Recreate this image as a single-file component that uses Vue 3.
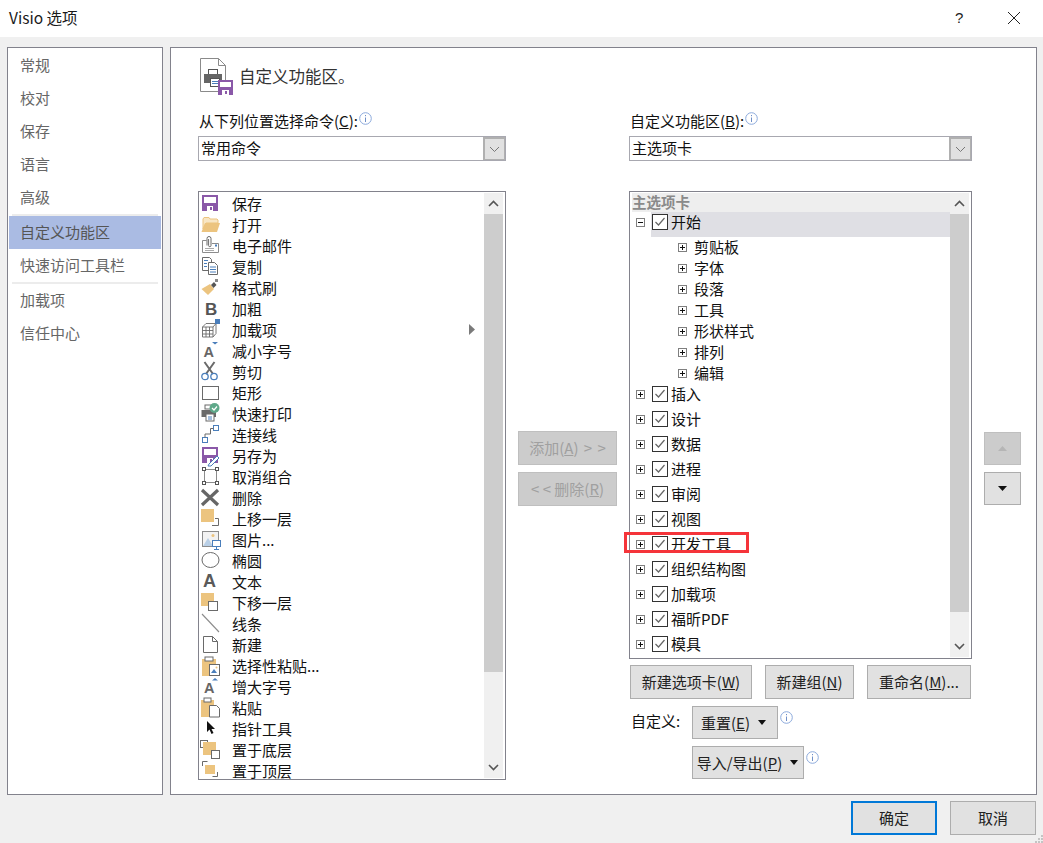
<script setup>
const nav = [
  { t: '常规' }, { t: '校对' }, { t: '保存' }, { t: '语言' }, { t: '高级' },
  { sep: true },
  { t: '自定义功能区', on: true }, { t: '快速访问工具栏' },
  { sep: true },
  { t: '加载项' }, { t: '信任中心' },
]

const T = '#ecc47f', G = '#6a6a6a', L = '#8c8c8c', B = '#4a7ebb', P = '#8a58a8'
const saveBase = `<rect x="2" y="1" width="16" height="16" fill="${P}"/><rect x="4" y="3" width="12" height="6" fill="#fff"/><rect x="7" y="12" width="6" height="5" fill="#fff"/><rect x="10" y="13" width="2" height="3" fill="${P}"/>`
const icons = {
  save: saveBase,
  open: `<path d="M3 14V4l1-1.500h5L10 4h7l1 1v3H6z" fill="#f8e6c4" stroke="${T}"/><path d="M1.500 17 5 8h15l-3 9z" fill="${T}"/>`,
  mail: `<path d="M6.500 4.500H2.500v12h16v-9H12" fill="none" stroke="${L}"/><path d="M7 9V2a2 2 0 0 1 4 0v7a1.200 1.200 0 0 1-2.400 0V2.500" fill="none" stroke="${G}" transform="translate(0 .5)"/><path d="M5 12.500h9M5 14.500h9" stroke="#aaa"/><rect x="15" y="8.500" width="2" height="2" fill="${B}"/>`,
  copy: `<path d="M2.500 .5h7l2 2v11h-9z" fill="#fff" stroke="${G}"/><path d="M8.500 5.500h6l3 3v9h-9z" fill="#fff" stroke="${G}"/><path d="M4 3.500h4M4 6.500h3M4 9.500h3M10 10h6M10 12.500h6M10 15h6" stroke="${B}"/>`,
  brush: `<path d="M1.500 11 10 6l4 5-6 6z" fill="${T}"/><path d="m11 7 3-3 2.500 3-3 3z" fill="#555"/><path d="M15 1h3v3h-3z" fill="#888"/>`,
  bold: `<text x="5" y="16" font-family="Liberation Sans, sans-serif" font-weight="700" font-size="17" fill="#555">B</text>`,
  addin: `<path d="M2.500 7 6 3.500h10v10L13 17H2.500zM2.500 7H13v10M13 7l3-3.500M6 7v10M9.500 7v10M2.500 10.500H13M2.500 14H13" fill="none" stroke="${G}" stroke-width=".9"/><rect x="15" y="-1" width="5" height="5" fill="${B}"/>`,
  shrink: `<text x="3.500" y="16" font-family="Liberation Sans, sans-serif" font-weight="700" font-size="14.500" fill="#666">A</text><path d="M12 1h6l-3 2.500z" fill="${B}"/>`,
  cut: `<path d="M4.500 0l8.500 12M14.500 0 6 12" stroke="${G}" stroke-width="2" fill="none"/><circle cx="5" cy="14.500" r="3.200" fill="none" stroke="${B}" stroke-width="1.300"/><circle cx="14" cy="14.500" r="3.200" fill="none" stroke="${B}" stroke-width="1.300"/>`,
  rect: `<rect x="2.500" y="3.500" width="16" height="13" fill="#fff" stroke="${G}"/>`,
  print: `<rect x="5" y="1" width="7" height="4" fill="#fff" stroke="${G}"/><path d="M1.500 6H16v7H1.500z" fill="${G}"/><rect x="6" y="10" width="8" height="7" fill="#fff" stroke="${G}"/><path d="M8 13h4M8 15h4" stroke="${B}"/><circle cx="14.500" cy="4" r="5" fill="#5fa98a"/><path d="m12 4 2 2 3-3.500" fill="none" stroke="#fff" stroke-width="1.200"/>`,
  connect: `<rect x="13.500" y=".5" width="5" height="5" fill="#fff" stroke="${B}"/><rect x="2.500" y="12.500" width="5" height="5" fill="#fff" stroke="${B}"/><path d="M13.500 3.500h-3V9H5v3.500" fill="none" stroke="${G}"/>`,
  saveas: saveBase + `<path d="m9 18 8-8 2 2-8 8H8z" fill="#fff" stroke="${B}"/>`,
  ungroup: `<rect x="4.500" y="2.500" width="12" height="13" fill="none" stroke="${L}"/><path d="M2 0h4v4H2zM15 0h4v4h-4zM2 14h4v4H2zM15 14h4v4h-4z" fill="#555"/><path d="M3 1h2v2H3zM16 1h2v2h-2zM3 15h2v2H3zM16 15h2v2h-2z" fill="#fff"/>`,
  del: `<path d="m2 2 16 15M18 2 2 17" stroke="#666" stroke-width="3.200"/>`,
  forward: `<path d="M12 16.500h6.500v-7H15" fill="none" stroke="${G}"/><rect x="1" y="0" width="13" height="13" fill="${T}"/>`,
  pic: `<rect x="2.500" y="1.500" width="16" height="15" fill="#f2f2f2" stroke="${L}"/><path d="M3 16 8 8l5 8z" fill="#b9cfe6"/><circle cx="13" cy="5.500" r="1.500" fill="${T}"/><rect x="12.500" y="10.500" width="8" height="6" fill="#fff" stroke="${B}"/><path d="M16.500 17v3M14 19.500h5" stroke="${B}"/>`,
  ellipse: `<ellipse cx="10.500" cy="9" rx="8.500" ry="7.500" fill="#fff" stroke="${G}"/>`,
  a: `<text x="3" y="15" font-family="Liberation Sans, sans-serif" font-weight="700" font-size="18" fill="#5a5a5a">A</text>`,
  backward: `<rect x="1" y="0" width="13" height="13" fill="${T}"/><rect x="8.500" y="8.500" width="9" height="9" fill="#fff" stroke="${G}"/>`,
  line: `<path d="m2 0 17 18" stroke="${L}" stroke-width="1.100"/>`,
  doc: `<path d="M3.500 1.500h9l5 5v11h-14z" fill="#fff" stroke="${G}"/><path d="M12.500 1.500v5h5" fill="none" stroke="${G}"/>`,
  pastesp: `<rect x="2" y="3" width="14" height="17" fill="${T}"/><rect x="5" y="1" width="8" height="4" fill="#fff" stroke="${G}"/><rect x="9.500" y="8.500" width="10" height="11" fill="#fff" stroke="${G}"/><path d="m11 17 3-4 3 4z" fill="${B}"/><circle cx="16.500" cy="11.500" r="1" fill="${T}"/>`,
  grow: `<text x="4" y="16" font-family="Liberation Sans, sans-serif" font-weight="700" font-size="14.500" fill="#666">A</text><path d="M12 3.500h6L15 1z" fill="${B}"/>`,
  paste: `<rect x="1" y="2" width="13" height="17" fill="${T}"/><rect x="4" y="0" width="7" height="4" fill="#fff" stroke="${G}"/><path d="M9.500 7.500h7l3 3v8.500h-10z" fill="#fff" stroke="${G}"/>`,
  pointer: `<path d="M7 2v11l2.500-2.500L11.500 15l2-1-2-4H15z" fill="#111"/>`,
  toback: `<rect x=".5" y=".5" width="7" height="7" fill="#fff" stroke="${G}"/><rect x="3" y="2" width="13" height="13" fill="${T}"/><rect x="11.500" y="10.500" width="8" height="8" fill="#fff" stroke="${G}"/>`,
  tofront: `<path d="M2.500 5V.5h5M17.500 11v4.500h-5" fill="none" stroke="${G}"/><rect x="5" y="4" width="10" height="9" fill="${T}"/>`,
}

const commands = [
  ['save', '保存'], ['open', '打开'], ['mail', '电子邮件'], ['copy', '复制'], ['brush', '格式刷'],
  ['bold', '加粗'], ['addin', '加载项', true], ['shrink', '减小字号'], ['cut', '剪切'], ['rect', '矩形'],
  ['print', '快速打印'], ['connect', '连接线'], ['saveas', '另存为'], ['ungroup', '取消组合'], ['del', '删除'],
  ['forward', '上移一层'], ['pic', '图片...'], ['ellipse', '椭圆'], ['a', '文本'], ['backward', '下移一层'],
  ['line', '线条'], ['doc', '新建'], ['pastesp', '选择性粘贴...'], ['grow', '增大字号'], ['paste', '粘贴'],
  ['pointer', '指针工具'], ['toback', '置于底层'], ['tofront', '置于顶层'],
].map(([icon, label, sub]) => ({ icon, label, sub }))

const groups = ['剪贴板', '字体', '段落', '工具', '形状样式', '排列', '编辑']
const tabs = ['插入', '设计', '数据', '进程', '审阅', '视图', '开发工具', '组织结构图', '加载项', '福昕PDF', '模具']
</script>

<template>
  <div class="dialog">
    <header class="titlebar">
      <span class="title">Visio 选项</span>
      <span class="help">?</span>
      <svg class="close" width="14" height="14" viewBox="0 0 14 14">
        <path d="M1 1l12 12M13 1 1 13" stroke="#222" stroke-width="1" />
      </svg>
    </header>

    <div class="body">
      <nav class="nav">
        <template v-for="(n, i) in nav" :key="i">
          <div v-if="n.sep" class="nav-sep"></div>
          <div v-else class="nav-item" :class="{ on: n.on }">{{ n.t }}</div>
        </template>
      </nav>

      <main class="panel">
        <div class="heading">
          <svg class="heading-icon" width="36" height="38" viewBox="0 0 36 38">
            <path d="M.5.5h18l7 7v26H.5z" fill="#fff" stroke="#8a8a8a" />
            <path d="M18.500.5v7h7" fill="none" stroke="#8a8a8a" />
            <rect x="8.500" y="11.500" width="9" height="5" fill="#fff" stroke="#555" />
            <path d="M4 16h18v9H4z" fill="#666" />
            <rect x="10.500" y="20.500" width="9" height="8" fill="#fff" stroke="#555" />
            <path d="M12 23.500h6M12 25.500h6" stroke="#4a7ebb" />
            <rect x="18" y="22" width="15" height="15" fill="#8a58a8" />
            <rect x="20" y="24" width="11" height="5" fill="#fff" />
            <rect x="22" y="32" width="7" height="5" fill="#fff" />
            <rect x="25" y="33" width="2" height="3" fill="#8a58a8" />
          </svg>
          <span class="heading-text">自定义功能区。</span>
        </div>

        <div class="columns">
          <section class="col-left">
            <div class="field-label">
              <span>从下列位置选择命令(<u>C</u>):</span>
              <svg class="info" width="13" height="13" viewBox="0 0 13 13">
                <circle cx="6.500" cy="6.500" r="5.800" fill="#fff" stroke="#8caadc" />
                <path d="M6.500 5.500v4.500M6.500 3v1.200" stroke="#6f8fc8" />
              </svg>
            </div>
            <div class="select">
              <span class="select-value">常用命令</span>
              <span class="select-btn">
                <svg width="11" height="7" viewBox="0 0 11 7"><path d="m1 1 4.500 4.500L10 1" fill="none" stroke="#777" /></svg>
              </span>
            </div>

            <div class="list list-commands">
              <div class="rows">
                <div v-for="c in commands" :key="c.label + c.icon" class="cmd">
                  <svg class="cmd-icon" width="21" height="21" viewBox="0 0 21 21" v-html="icons[c.icon]"></svg>
                  <span>{{ c.label }}</span>
                  <svg v-if="c.sub" class="cmd-sub" width="6" height="11" viewBox="0 0 6 11"><path d="M0 0l6 5.500L0 11z" fill="#7a7a7a" /></svg>
                </div>
              </div>
              <div class="scroll">
                <span class="scroll-btn">
                  <svg width="11" height="7" viewBox="0 0 11 7"><path d="m1 6 4.500-4.500L10 6" fill="none" stroke="#555" stroke-width="1.600" /></svg>
                </span>
                <span class="thumb thumb-commands"></span>
                <span class="scroll-space"></span>
                <span class="scroll-btn">
                  <svg width="11" height="7" viewBox="0 0 11 7"><path d="m1 1 4.500 4.500L10 1" fill="none" stroke="#555" stroke-width="1.600" /></svg>
                </span>
              </div>
            </div>
          </section>

          <section class="col-mid">
            <button class="btn disabled add add-wide"><span>添加(<u>A</u>) &gt; &gt;</span></button>
            <button class="btn disabled add"><span>&lt; &lt; 删除(<u>R</u>)</span></button>
          </section>

          <section class="col-right">
            <div class="field-label">
              <span>自定义功能区(<u>B</u>):</span>
              <svg class="info" width="13" height="13" viewBox="0 0 13 13">
                <circle cx="6.500" cy="6.500" r="5.800" fill="#fff" stroke="#8caadc" />
                <path d="M6.500 5.500v4.500M6.500 3v1.200" stroke="#6f8fc8" />
              </svg>
            </div>
            <div class="select">
              <span class="select-value">主选项卡</span>
              <span class="select-btn">
                <svg width="11" height="7" viewBox="0 0 11 7"><path d="m1 1 4.500 4.500L10 1" fill="none" stroke="#777" /></svg>
              </span>
            </div>

            <div class="list list-tree">
              <div class="rows">
                <div class="tree-head">主选项卡</div>

                <div class="tab">
                  <svg class="exp" width="9" height="9" viewBox="0 0 9 9">
                    <rect x=".5" y=".5" width="8" height="8" fill="#fff" stroke="#7f7f7f" />
                    <path d="M2 4.500h5" stroke="#111" />
                  </svg>
                  <div class="tab-label active">
                    <svg class="check" width="16" height="16" viewBox="0 0 16 16">
                      <rect x=".5" y=".5" width="15" height="15" fill="#fff" stroke="#333" />
                      <path d="m3.500 8 3 3 6-7" fill="none" stroke="#666" stroke-width="1.200" />
                    </svg>
                    <span>开始</span>
                  </div>
                </div>

                <div v-for="g in groups" :key="g" class="group">
                  <svg class="exp" width="9" height="9" viewBox="0 0 9 9">
                    <rect x=".5" y=".5" width="8" height="8" fill="#fff" stroke="#7f7f7f" />
                    <path d="M2 4.500h5M4.500 2v5" stroke="#111" />
                  </svg>
                  <span>{{ g }}</span>
                </div>

                <div v-for="t in tabs" :key="t" class="tab">
                  <svg class="exp" width="9" height="9" viewBox="0 0 9 9">
                    <rect x=".5" y=".5" width="8" height="8" fill="#fff" stroke="#7f7f7f" />
                    <path d="M2 4.500h5M4.500 2v5" stroke="#111" />
                  </svg>
                  <div class="tab-label">
                    <svg class="check" width="16" height="16" viewBox="0 0 16 16">
                      <rect x=".5" y=".5" width="15" height="15" fill="#fff" stroke="#333" />
                      <path d="m3.500 8 3 3 6-7" fill="none" stroke="#666" stroke-width="1.200" />
                    </svg>
                    <span>{{ t }}</span>
                  </div>
                  <div v-if="t === '开发工具'" class="highlight"></div>
                </div>
              </div>
              <div class="scroll">
                <span class="scroll-btn">
                  <svg width="11" height="7" viewBox="0 0 11 7"><path d="m1 6 4.500-4.500L10 6" fill="none" stroke="#555" stroke-width="1.600" /></svg>
                </span>
                <span class="thumb thumb-tree"></span>
                <span class="scroll-space"></span>
                <span class="scroll-btn">
                  <svg width="11" height="7" viewBox="0 0 11 7"><path d="m1 1 4.500 4.500L10 1" fill="none" stroke="#555" stroke-width="1.600" /></svg>
                </span>
              </div>
            </div>

            <div class="tree-actions">
              <button class="btn w-tab"><span>新建选项卡(<u>W</u>)</span></button>
              <button class="btn w-group"><span>新建组(<u>N</u>)</span></button>
              <button class="btn w-rename"><span>重命名(<u>M</u>)...</span></button>
            </div>

            <div class="custom">
              <span class="custom-label">自定义:</span>
              <div class="custom-buttons">
                <div class="custom-line">
                  <button class="btn w-reset"><span>重置(<u>E</u>)</span><i class="caret"></i></button>
                  <svg class="info info-btn" width="13" height="13" viewBox="0 0 13 13">
                    <circle cx="6.500" cy="6.500" r="5.800" fill="#fff" stroke="#8caadc" />
                    <path d="M6.500 5.500v4.500M6.500 3v1.200" stroke="#6f8fc8" />
                  </svg>
                </div>
                <div class="custom-line">
                  <button class="btn w-io"><span>导入/导出(<u>P</u>)</span><i class="caret"></i></button>
                  <svg class="info info-btn" width="13" height="13" viewBox="0 0 13 13">
                    <circle cx="6.500" cy="6.500" r="5.800" fill="#fff" stroke="#8caadc" />
                    <path d="M6.500 5.500v4.500M6.500 3v1.200" stroke="#6f8fc8" />
                  </svg>
                </div>
              </div>
            </div>
          </section>

          <section class="col-move">
            <button class="btn disabled move">
              <svg width="9" height="5" viewBox="0 0 9 5"><path d="M0 5 4.500 0 9 5z" fill="#b5b5b5" /></svg>
            </button>
            <button class="btn move">
              <svg width="9" height="5" viewBox="0 0 9 5"><path d="M0 0h9L4.500 5z" fill="#111" /></svg>
            </button>
          </section>
        </div>
      </main>
    </div>

    <footer class="footer">
      <button class="btn foot primary"><span>确定</span></button>
      <button class="btn foot"><span>取消</span></button>
      <svg class="grip" width="8" height="8" viewBox="0 0 8 8">
        <path d="M6 0h2v2H6zM3 3h2v2H3zM6 3h2v2H6zM0 6h2v2H0zM3 6h2v2H3zM6 6h2v2H6z" fill="#c4c4c4" />
      </svg>
    </footer>
  </div>
</template>

<style>
html, body { margin: 0; background: #f0f0f0; }
</style>

<style scoped>
.dialog {
  position: relative;
  width: 1043px;
  height: 843px;
  overflow: hidden;
  background: #f0f0f0;
  color: #111;
  font-family: "Noto Sans CJK SC", "Noto Sans", sans-serif;
  font-size: 15px;
}
.titlebar {
  height: 37px;
  background: #fff;
  display: flex;
  align-items: center;
  padding-left: 9px;
  padding-right: 22px;
}
.title { flex: 1; font-size: 15.500px; margin-bottom: 4px; color: #1a1a1a; }
.help { font-family: "Liberation Sans", sans-serif; font-size: 15px; width: 52px; margin-bottom: 2px; color: #222; }
.close { display: block; margin-bottom: 2px; }

.body {
  display: flex;
  gap: 7px;
  padding: 10px 6px 0 7px;
  height: 748px;
}
.nav {
  width: 152px;
  border: 1px solid #82828c;
  background: #fff;
  padding: 1px;
}
.nav-item {
  height: 33px;
  line-height: 31px;
  padding-left: 11px;
  color: #666;
  white-space: nowrap;
}
.nav-item.on { background: #aabbe3; color: #555; }
.nav-sep {
  height: 2px;
  margin: 0 3px;
  background: #ececec;
}
.panel {
  flex: 1;
  min-width: 0;
  border: 1px solid #82828c;
  background: #fff;
  padding: 10px 0 0 27px;
}
.heading {
  height: 54px;
  display: flex;
  align-items: flex-start;
}
.heading-icon { display: block; margin-left: 2px; }
.heading-text {
  margin-left: 3px;
  margin-top: 8px;
  font-size: 16.500px;
  line-height: 20px;
  color: #333;
}
.columns { display: flex; gap: 12px; }
.col-left { width: 308px; }
.col-mid {
  width: 99px;
  padding-top: 319px;
  display: flex;
  flex-direction: column;
  gap: 7px;
}
.col-right { width: 343px; }
.col-move {
  width: 37px;
  padding-top: 320px;
  display: flex;
  flex-direction: column;
  gap: 7px;
}
.field-label {
  display: flex;
  align-items: flex-start;
  height: 20px;
  line-height: 18px;
  padding-left: 1px;
  margin-bottom: 4px;
  white-space: nowrap;
}
.info { display: block; flex: none; margin-left: 1px; margin-top: 0; }
.select {
  height: 25px;
  box-sizing: border-box;
  border: 1px solid #a8a8b0;
  background: #fff;
  display: flex;
  align-items: stretch;
  margin-bottom: 30px;
}
.select-value { flex: 1; padding-left: 2px; line-height: 21px; }
.select-btn {
  width: 22px;
  box-sizing: border-box;
  border: 2px solid #b0b0b0;
  border-right-width: 1px;
  border-bottom-width: 1px;
  background: #e1e1e1;
  display: flex;
  align-items: center;
  justify-content: center;
}
.list {
  box-sizing: border-box;
  border: 1px solid #82828c;
  background: #fff;
  display: flex;
}
.list-commands { height: 589px; overflow: hidden; }
.list-tree { height: 468px; }
.rows { flex: 1; min-width: 0; position: relative; }
.list-commands .rows { padding-top: 1px; }
.cmd {
  display: flex;
  align-items: center;
  height: 21px;
  line-height: 21px;
  padding-left: 1px;
  padding-right: 9px;
}
.cmd-icon { display: block; flex: none; margin: 2px 11px 0 0; overflow: visible; }
.cmd-sub { display: block; margin-left: auto; }
.scroll {
  width: 19px;
  margin: 1px 2px 1px 0;
  background: #f0f0f0;
  display: flex;
  flex-direction: column;
  flex: none;
}
.scroll-btn {
  height: 21px;
  display: flex;
  align-items: center;
  justify-content: center;
  flex: none;
}
.thumb { background: #cdcdcd; flex: none; }
.thumb-commands { height: 458px; }
.thumb-tree { height: 398px; }
.scroll-space { flex: 1; }

.tree-head {
  margin: 1px 0 0 2px;
  height: 19px;
  line-height: 17px;
  background: #eeeeee;
  color: #8a8a8a;
  font-weight: 700;
  font-size: 14.500px;
}
.tab {
  position: relative;
  display: flex;
  align-items: flex-start;
  height: 25px;
  padding-left: 6px;
  line-height: 19px;
}
.exp { display: block; flex: none; margin-top: 6px; }
.tab-label {
  flex: 1;
  height: 25px;
  margin-left: 6px;
  padding-left: 1px;
  display: flex;
  align-items: flex-start;
}
.tab-label.active { background: #dfdfe4; }
.check { display: block; margin: 2px 3px 0 0; flex: none; }
.group {
  display: flex;
  align-items: flex-start;
  height: 21px;
  line-height: 20px;
  padding-left: 48px;
}
.group span { margin-left: 7px; }
.highlight {
  position: absolute;
  left: -6px;
  top: -2px;
  width: 125px;
  height: 21px;
  box-sizing: border-box;
  border: 3px solid #f5343a;
  pointer-events: none;
}

.btn {
  display: flex;
  align-items: center;
  justify-content: center;
  box-sizing: border-box;
  border: 1px solid #adadad;
  background: #e1e1e1;
  color: #222;
  font: inherit;
  padding: 0 0 1px;
  white-space: nowrap;
}
.btn.disabled { background: #cccccc; border-color: #bfbfbf; color: #a0a0a0; }
.add { width: 99px; height: 34px; }
.add-wide { word-spacing: 2px; }
.move { width: 37px; height: 33px; padding: 0; }
.tree-actions {
  display: flex;
  margin-top: 6px;
  padding-left: 1px;
}
.tree-actions .btn { height: 34px; }
.w-tab { width: 122px; }
.w-group { width: 89px; margin-left: 13px; }
.w-rename { width: 104px; margin-left: 13px; }
.custom { display: flex; margin-top: 7px; padding-left: 2px; }
.custom-label { width: 61px; line-height: 30px; }
.custom-buttons { display: flex; flex-direction: column; gap: 7px; }
.custom-line { display: flex; align-items: flex-start; }
.info-btn { margin-left: 2px; margin-top: 5px; }
.w-reset { width: 86px; height: 33px; padding-right: 3px; }
.w-io { width: 112px; height: 33px; padding-right: 1px; }
.caret {
  width: 0;
  height: 0;
  margin-left: 8px;
  border-left: 4.500px solid transparent;
  border-right: 4.500px solid transparent;
  border-top: 5px solid #111;
}

.footer {
  position: relative;
  display: flex;
  justify-content: flex-end;
  gap: 13px;
  padding: 6px 7px 0 0;
}
.foot { width: 86px; height: 34px; }
.primary { border: 2px solid #0078d7; }
.grip { position: absolute; right: 0; bottom: -8px; }
</style>
